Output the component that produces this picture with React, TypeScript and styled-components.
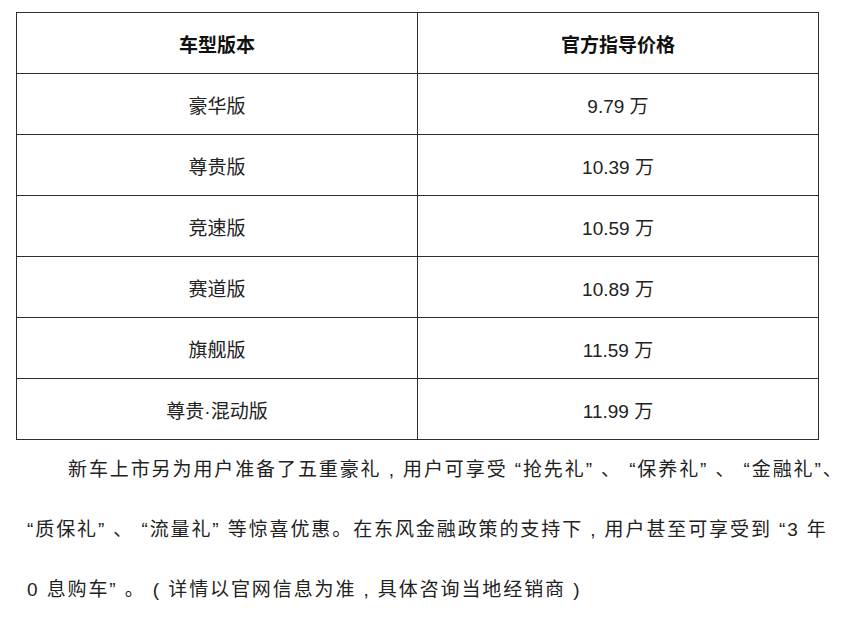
import React from "react";
import styled, { createGlobalStyle } from "styled-components";

const Global = createGlobalStyle`
  html, body { margin: 0; padding: 0; background: #ffffff; }
  body { font-family: "Liberation Sans", "Noto Sans CJK SC", sans-serif; color: #222; }
`;

const Page = styled.div`
  width: 852px;
  padding: 12px 0 0 16px;
  box-sizing: border-box;
`;

const Table = styled.table`
  width: 803px;
  border-collapse: collapse;
  table-layout: fixed;
`;

const Cell = styled.td<{ $head?: boolean }>`
  height: 60px;
  padding: 0;
  border: 1.5px solid #2e2e2e;
  text-align: center;
  vertical-align: middle;
  font-size: 19px;
  font-weight: ${(p) => (p.$head ? 700 : 400)};
  color: ${(p) => (p.$head ? "#111" : "#222")};
`;

const Para = styled.p`
  margin: 0;
  padding: 0 0 0 11px;
  width: 836px;
  box-sizing: border-box;
  font-size: 19px;
  letter-spacing: 1.9px;
  line-height: 60px;
  text-indent: 41px;
  white-space: nowrap;
  color: #222;
`;

const rows: [string, string][] = [
  ["豪华版", "9.79 万"],
  ["尊贵版", "10.39 万"],
  ["竞速版", "10.59 万"],
  ["赛道版", "10.89 万"],
  ["旗舰版", "11.59 万"],
  ["尊贵·混动版", "11.99 万"],
];

export default function App() {
  return (
    <>
      <Global />
      <Page>
        <Table>
          <tbody>
            <tr>
              <Cell $head>车型版本</Cell>
              <Cell $head>官方指导价格</Cell>
            </tr>
            {rows.map(([a, b]) => (
              <tr key={a}>
                <Cell>{a}</Cell>
                <Cell>{b}</Cell>
              </tr>
            ))}
          </tbody>
        </Table>
        <Para>
          新车上市另为用户准备了五重豪礼 , 用户可享受 “抢先礼” 、 “保养礼” 、 “金融礼”、
          <br />
          “质保礼” 、 “流量礼” 等惊喜优惠。在东风金融政策的支持下 , 用户甚至可享受到 “3 年
          <br />
          0 息购车” 。 ( 详情以官网信息为准 , 具体咨询当地经销商 )
        </Para>
      </Page>
    </>
  );
}
